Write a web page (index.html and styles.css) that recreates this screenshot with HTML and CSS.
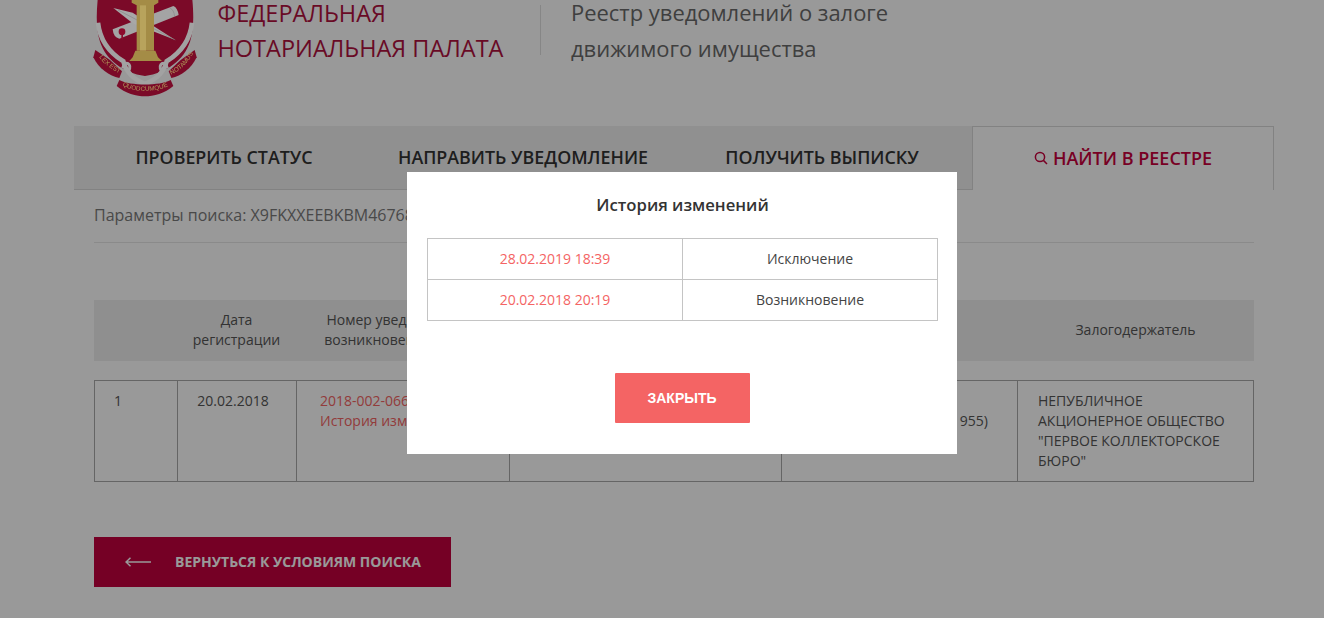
FILE: index.html
```html
<!DOCTYPE html>
<html lang="ru">
<head>
<meta charset="utf-8">
<title>Реестр уведомлений о залоге движимого имущества</title>
<link rel="stylesheet" href="styles.css">
</head>
<body>
<div class="page">
  <header class="header">
    <svg class="logo" viewBox="0 0 330 300" aria-hidden="true">
      <path class="l-shield" d="M25 -20C18 40 18 90 30 125C48 180 100 218 165 228C230 218 282 180 300 125C312 90 312 40 305 -20Z"/>
      <path class="l-mantle" d="M24 68C30 125 62 160 100 184C108 218 135 240 165 252C195 240 222 218 230 184C268 160 300 125 306 68" />
      <path class="l-scroll" d="M68 88L250 18Q262 22 266 45L88 116Q70 112 68 88Z"/>
      <path class="l-line" d="M240 24Q252 30 254 50"/>
      <path class="l-quill" d="M70 24L128 38L256 120L128 70Z"/>
      <path class="l-line" d="M84 30L256 120"/>
      <circle class="l-seal" cx="96" cy="95" r="10"/>
      <path class="l-seal" d="M94 100h5v18h-5z"/>
      <path class="l-gold" d="M125 -10H205V8L192 16V152H140V16L125 8Z"/>
      <path class="l-gold-lt" d="M150 16H168V152H150Z"/>
      <path class="l-gold" d="M136 152H196L204 172L216 183H118L128 172Z"/>
      <path class="l-ribbon" d="M16 150L60 180L96 214L88 234C58 228 26 206 10 172Z"/>
      <path class="l-ribbon" d="M314 150L272 180L236 214L244 234C274 228 304 206 320 172Z"/>
      <path class="l-ribbon" d="M88 240C120 258 210 258 242 240L250 258C225 280 190 289 165 289C140 289 105 280 80 258Z"/>
      <path class="l-mantle-thin" d="M98 205C105 178 128 192 116 212M232 205C225 178 202 192 214 212"/>
      <path id="lp1" class="l-none" d="M25 168C40 190 62 208 92 222"/>
      <path id="lp2" class="l-none" d="M96 256C130 278 200 278 238 256"/>
      <path id="lp3" class="l-none" d="M244 224C272 210 294 190 308 162"/>
      <text class="l-text"><textPath href="#lp1" startOffset="4">LEX EST</textPath></text>
      <text class="l-text"><textPath href="#lp2" startOffset="1">QUODCUMQUE</textPath></text>
      <text class="l-text"><textPath href="#lp3" startOffset="0">NOTAMUS</textPath></text>
    </svg>
    <div class="title org"><span class="title-top">ФЕДЕРАЛЬНАЯ</span><span>НОТАРИАЛЬНАЯ ПАЛАТА</span></div>
    <div class="divider"></div>
    <div class="title service"><span class="title-top">Реестр уведомлений о залоге</span><span>движимого имущества</span></div>
  </header>

  <nav class="tabs">
    <a class="tab">ПРОВЕРИТЬ СТАТУС</a>
    <a class="tab">НАПРАВИТЬ УВЕДОМЛЕНИЕ</a>
    <a class="tab">ПОЛУЧИТЬ ВЫПИСКУ</a>
    <a class="tab tab-active">
      <svg class="search-icon" viewBox="0 0 14 14" aria-hidden="true"><circle cx="6" cy="6" r="4.6"/><path d="M9.4 9.4L13 13"/></svg>
      НАЙТИ В РЕЕСТРЕ
    </a>
  </nav>

  <main class="content">
    <div class="params">Параметры поиска: X9FKXXEEBKBM46768</div>

    <div class="grid grid-head">
      <div></div>
      <div>Дата<br>регистрации</div>
      <div>Номер уведомления о<br>возникновении залога</div>
      <div></div>
      <div></div>
      <div>Залогодержатель</div>
    </div>

    <div class="grid grid-row">
      <div class="c-num">1</div>
      <div class="c-date">20.02.2018</div>
      <div class="c-link">2018-002-066<br>История изменений</div>
      <div></div>
      <div class="c-hidden"><br>955)</div>
      <div class="c-left">НЕПУБЛИЧНОЕ АКЦИОНЕРНОЕ ОБЩЕСТВО "ПЕРВОЕ КОЛЛЕКТОРСКОЕ БЮРО"</div>
    </div>

    <a class="back">
      <svg class="back-arrow" viewBox="0 0 26 10" aria-hidden="true"><path d="M26 5H1M5.5 .8L1 5L5.5 9.2"/></svg>
      ВЕРНУТЬСЯ К УСЛОВИЯМ ПОИСКА
    </a>
  </main>
</div>

<div class="overlay"></div>

<section class="modal">
  <h2 class="modal-title">История изменений</h2>
  <div class="history">
    <div class="h-date">28.02.2019 18:39</div>
    <div class="h-status">Исключение</div>
    <div class="h-date">20.02.2018 20:19</div>
    <div class="h-status">Возникновение</div>
  </div>
  <button class="close">ЗАКРЫТЬ</button>
</section>
</body>
</html>
```
FILE: styles.css
```css
* { box-sizing: border-box; }
html, body { margin: 0; height: 100%; overflow: hidden; background: #fff; }
body { font-family: "Open Sans", sans-serif; color: #333; font-size: 14px; }

.page { width: 1200px; margin: 0 0 0 74px; }

.header { display: flex; align-items: flex-start; height: 126px; padding-left: 16px; }
.logo { width: 110px; height: 100px; flex: none; position: relative; z-index: 2; }
.l-shield { fill: #7b0a28; }
.l-mantle { fill: none; stroke: #a2a2a2; stroke-width: 14; }
.l-mantle-thin { fill: none; stroke: #a2a2a2; stroke-width: 9; }
.l-scroll { fill: #a4a4a4; }
.l-quill { fill: #a8a8a8; }
.l-line { fill: none; stroke: #7d7d7d; stroke-width: 1.5; }
.l-seal { fill: #8c0b2c; }
.l-gold { fill: #a48c46; }
.l-gold-lt { fill: #b8a35c; }
.l-ribbon { fill: #7b0a28; }
.l-none { fill: none; }
.l-text { font: 19px "Liberation Sans", sans-serif; fill: #b09a5a; }

.title { display: flex; flex-direction: column; white-space: nowrap; line-height: 36px; }
.title-top { line-height: 26px; }
.org { margin-left: 17.5px; width: 322.5px; font-size: 23.5px; color: #b0123f; gap: 4px; }
.divider { flex: none; width: 1px; height: 50px; margin: 5px 30px 0 0; background: #e0e0e0; }
.service { font-size: 21.95px; color: #6a6a6a; gap: 4.5px; }

.tabs { display: grid; grid-template-columns: 300px 298px 300px 302px; height: 64px; background: #f0f0f0; border-bottom: 1px solid #d9d9d9; }
.tab { display: flex; align-items: center; justify-content: center; padding-bottom: 2px; font-size: 17.85px; font-weight: 600; color: #333; white-space: nowrap; }
.tab-active { background: #fff; font-size: 18px; color: #c8003c; border: 1px solid #d9d9d9; border-bottom: 0; margin-bottom: -1px; gap: 5px; }
.search-icon { width: 14px; height: 14px; fill: none; stroke: #c8003c; stroke-width: 1.5; }

.content { padding: 0 20px; }
.params { height: 53px; padding-top: 14px; line-height: 22px; font-size: 16px; color: #7a7a7a; border-bottom: 1px solid #e6e6e6; margin-bottom: 57px; white-space: nowrap; overflow: hidden; }

.grid { display: grid; grid-template-columns: 83px 119px 213px 272px 236px 237px; }
.grid-head { height: 61px; padding-bottom: 2px; background: #eee; align-items: center; text-align: center; line-height: 20px; color: #555; margin-bottom: 19px; }
.grid-row { grid-template-columns: 82px 119px 213px 272px 236px 236px; height: 102px; border: 1px solid #a8a8a8; line-height: 20px; color: #555; margin-bottom: 55px; }
.grid-row > div { padding-top: 10px; border-left: 1px solid #a8a8a8; }
.grid-row > div:first-child { border-left: 0; }
.c-num { padding-left: 19px; }
.c-date { text-align: center; padding-right: 8px; }
.c-link { padding-left: 23px; color: #f46464; }
.c-hidden { text-align: right; padding-right: 29px; }
.c-left { padding: 10px 20px 0; }

.back { display: flex; align-items: center; width: 357px; height: 50px; padding: 0 0 1px 31px; gap: 24px; background: #c3003e; color: #fff; font-size: 14px; font-weight: 700; white-space: nowrap; }
.back-arrow { width: 26px; height: 10px; fill: none; stroke: #fff; stroke-width: 1.5; flex: none; }

.overlay { position: fixed; inset: 0; background: rgba(0, 0, 0, .4); z-index: 1; }

.modal { position: fixed; left: 407px; top: 172px; width: 550px; height: 282px; background: #fff; z-index: 3; padding: 20px 19px 0 20px; display: flex; flex-direction: column; align-items: center; }
.modal-title { margin: 0; font-size: 16.7px; line-height: 26px; font-weight: 600; color: #333; }
.history { margin-top: 20px; width: 511px; display: grid; grid-template-columns: 255px 255px; border-top: 1px solid #c4c4c4; border-left: 1px solid #c4c4c4; }
.history > div { height: 41px; padding-bottom: 2px; display: flex; align-items: center; justify-content: center; border-right: 1px solid #c4c4c4; border-bottom: 1px solid #c4c4c4; font-size: 14px; }
.h-date { color: #f46464; }
.h-status { color: #444; }
.close { margin-top: 52px; width: 135px; height: 50px; padding: 0 1px 0 0; border: 0; border-radius: 1px; background: #f46464; color: #fff; font: 700 14px "Liberation Sans", Arial, sans-serif; }
```
